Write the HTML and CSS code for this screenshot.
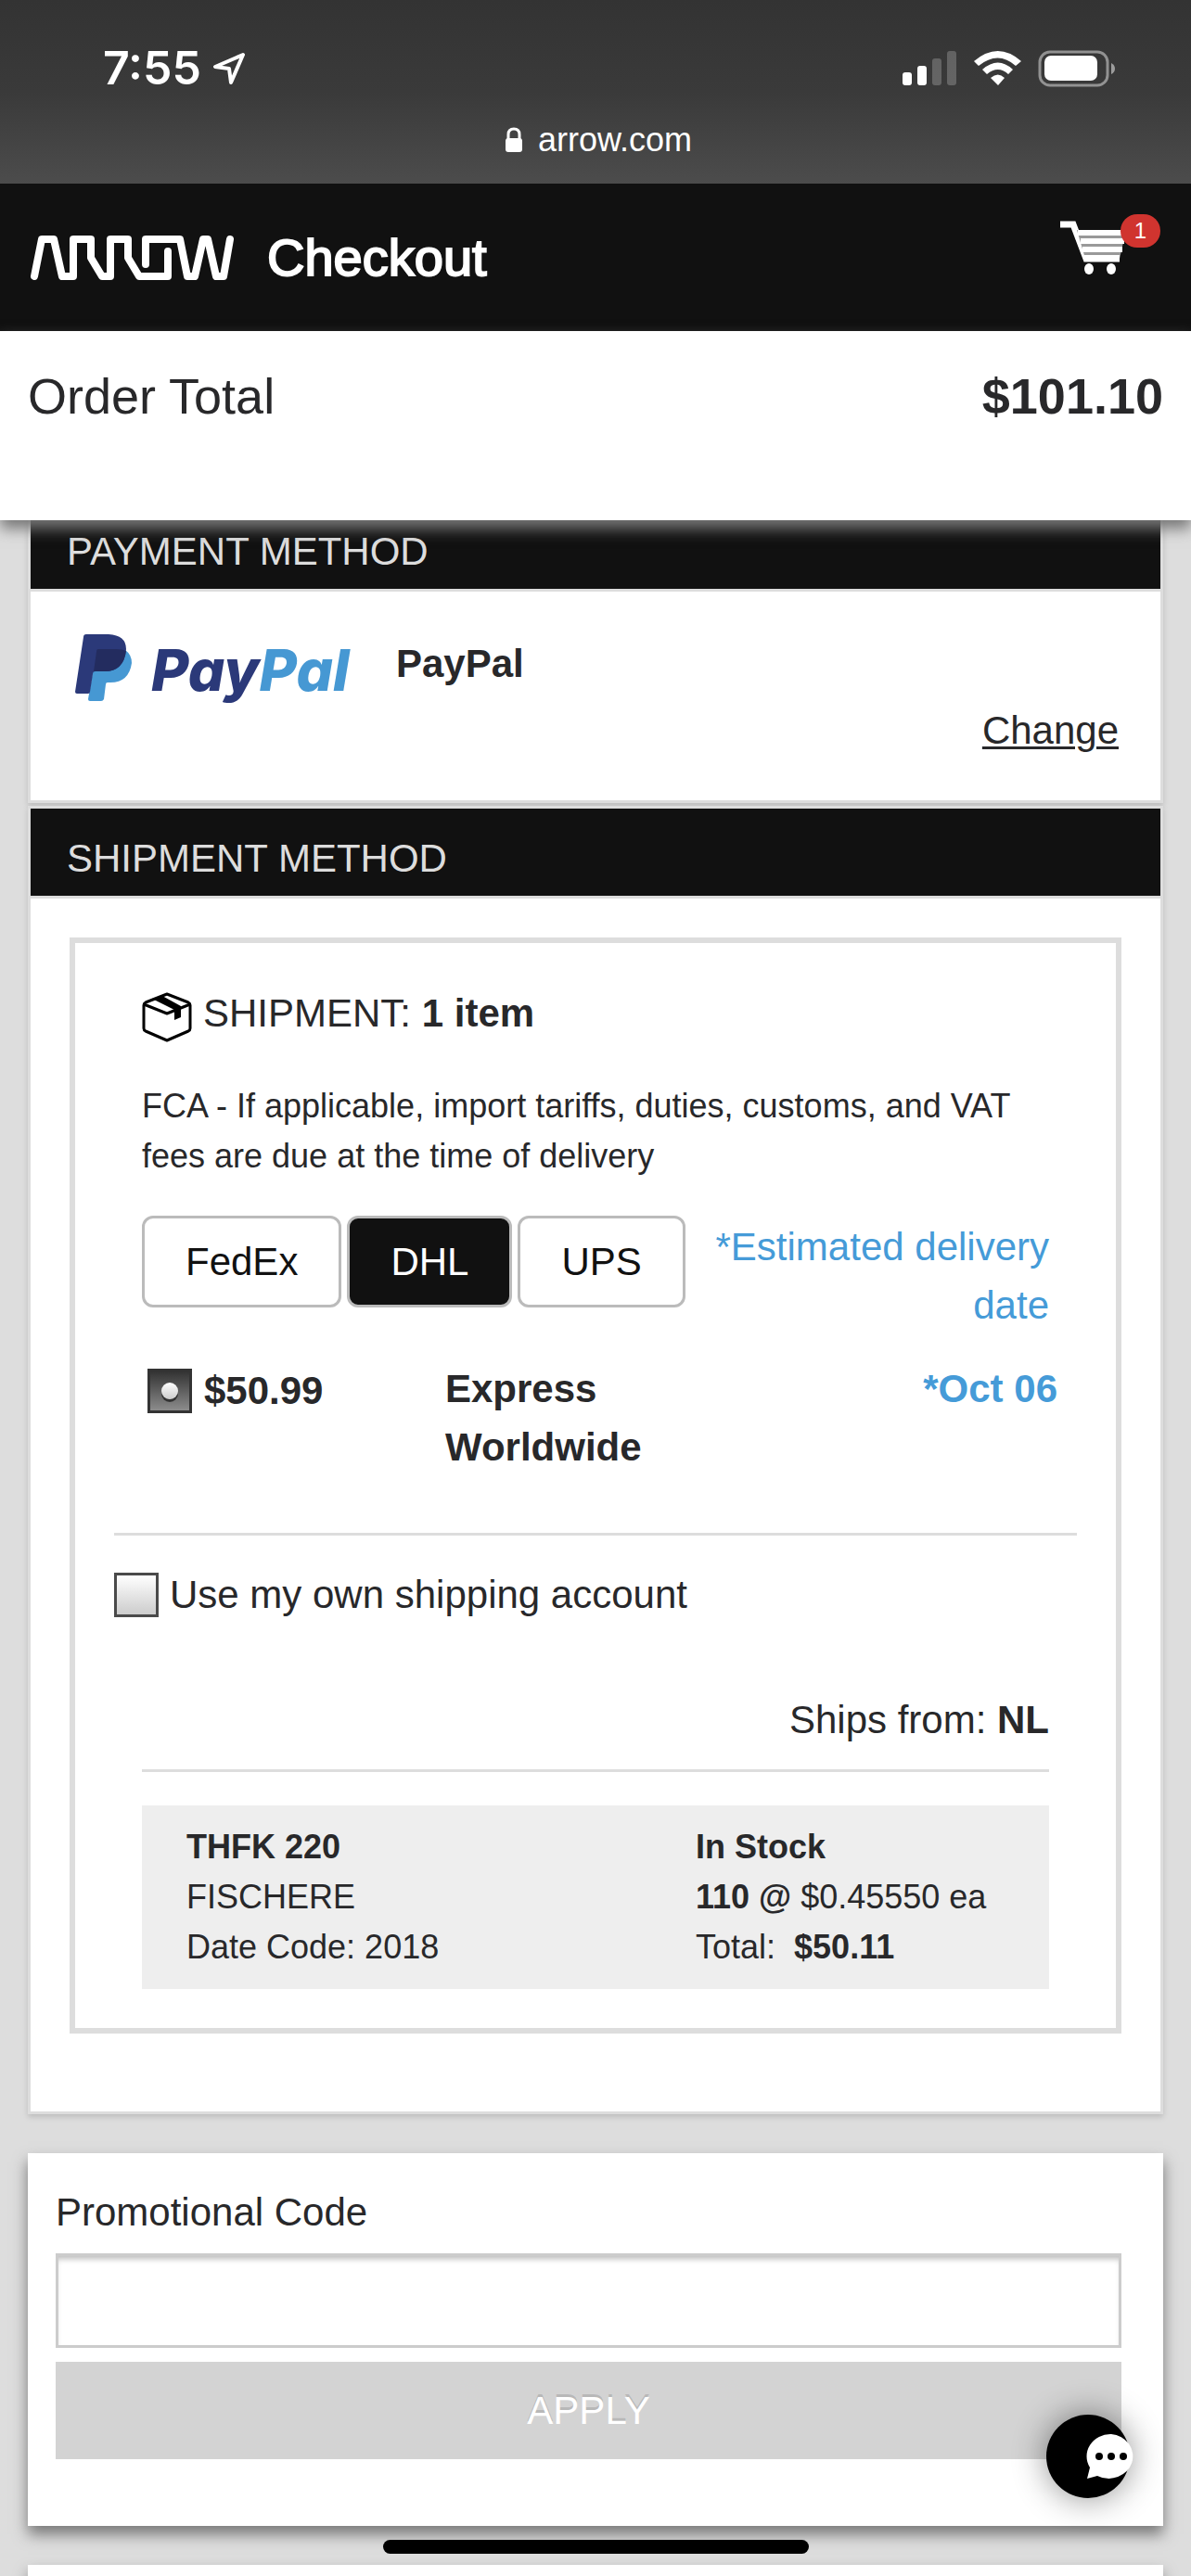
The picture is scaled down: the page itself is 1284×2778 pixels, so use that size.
FILE: index.html
```html
<!DOCTYPE html>
<html lang="en">
<head>
    <meta charset="UTF-8">
    <meta name="viewport" content="width=device-width, initial-scale=1.0">
    <title>Checkout</title>
    <link rel="stylesheet" href="styles.css">
</head>
<body>

<div class="status-bar">
    <div class="status-row">
        <div class="clock">
            <span>7:55</span>
            <svg width="36" height="36" viewBox="0 0 36 36" fill="none" stroke="white" stroke-width="4" stroke-linejoin="round">
                <path d="M33 3 L3 16 L18 18 L20 33 Z"/>
            </svg>
        </div>
        <svg class="status-icons" width="232" height="40" viewBox="0 0 232 40">
            <g fill="white">
                <rect x="0" y="24" width="10" height="14" rx="3"/>
                <rect x="16" y="17" width="10" height="21" rx="3"/>
                <rect x="32" y="9" width="10" height="29" rx="3" opacity=".22"/>
                <rect x="48" y="1" width="10" height="37" rx="3" opacity=".22"/>
                <path d="M77 12 Q103 -10 128 12 L122 17 Q103 0 82 17 Z"/>
                <path d="M86 21 Q103 6 119 21 L114 26 Q103 16 91 26 Z"/>
                <path d="M95 30 Q103 23 110 30 L103 38 Z"/>
                <rect x="153" y="6" width="57" height="27" rx="7"/>
                <path d="M225 14 Q229 16 229 20 Q229 24 225 26 Z" opacity=".5"/>
            </g>
            <rect x="148" y="2" width="73" height="36" rx="11" fill="none" stroke="white" stroke-width="3" opacity=".45"/>
        </svg>
    </div>
    <div class="address">
        <svg width="20" height="28" viewBox="0 0 20 28">
            <rect x="1" y="12" width="18" height="15" rx="3" fill="white"/>
            <path d="M4 13 V8 Q4 2 10 2 Q16 2 16 8 V13" fill="none" stroke="white" stroke-width="3"/>
        </svg>
        <span>arrow.com</span>
    </div>
</div>

<header class="navbar">
    <a class="logo" href="#" aria-label="Arrow">
        <svg width="219" height="48" viewBox="0 0 219 48" fill="none" stroke="white" stroke-width="8" stroke-linejoin="round" stroke-linecap="round">
            <path d="M4 44 L12 4 H25 L34 44 H46 V4 H65 V24 L77 44 H86 V4 H105 V24 L117 44 H148 V17"/>
            <path d="M124 31 V4 H161 L169 44 H177 L186 4 H191 L200 44 H208 L215 4"/>
        </svg>
    </a>
    <h1>Checkout</h1>
    <a class="cart" href="#" aria-label="Cart">
        <svg width="72" height="60" viewBox="0 0 72 60">
            <path d="M0 5 H14 L28 42 H64" fill="none" stroke="white" stroke-width="7"/>
            <path d="M18 11 H71 L64 42 H27 Z" fill="#999"/>
            <path d="M19 14 H70 M22 23 H69 M24 32 H67 M26 41 H64" stroke="white" stroke-width="6"/>
            <ellipse cx="31" cy="53" rx="5" ry="6" fill="white"/>
            <ellipse cx="55" cy="53" rx="5" ry="6" fill="white"/>
        </svg>
        <span class="badge">1</span>
    </a>
</header>

<section class="order-total">
    <span>Order Total</span>
    <strong>$101.10</strong>
</section>

<main>
    <section class="card">
        <h2>PAYMENT METHOD</h2>
        <div class="payment">
            <div class="payment-row">
                <div class="paypal">
                    <svg width="61" height="72" viewBox="0 0 61 72">
                        <path d="M23 17 H54 Q61 22 61 31 Q58 52 38 52 H35 Q33 52 33 54 L31 70 Q30 72 28 72 H16 Q14 72 14 70 Z" fill="#4698d3"/>
                        <path d="M12 0 H36 Q55 1 55 16 Q53 40 32 40 H22 Q19 40 19 43 L16 62 Q16 64 14 64 H2 Q0 64 0 62 L9 3 Q9 0 12 0 Z" fill="#2b3979"/>
                        <path d="M25 16 H44 Q51 16 55 18 Q52 40 32 40 H20 L23 19 Q23 16 25 16 Z" fill="#232c5f"/>
                    </svg>
                    <span class="wordmark">Pay<span>Pal</span></span>
                </div>
                <strong>PayPal</strong>
            </div>
            <a class="change" href="#">Change</a>
        </div>
    </section>

    <section class="card">
        <h2>SHIPMENT METHOD</h2>
        <div class="shipment">
            <div class="frame">
                <div class="shipment-title">
                    <svg width="54" height="54" viewBox="0 0 54 54" fill="none" stroke="black" stroke-width="3" stroke-linejoin="round">
                        <path d="M27 2 L50 11 Q52 12 52 14 V39 Q52 41 50 42 L27 52 L4 42 Q2 41 2 39 V14 Q2 12 4 11 Z"/>
                        <path d="M2 13 L27 23 L52 13"/>
                        <path d="M11 7 L22 4 L42 15 V27 L35 30 V19 Z" fill="black" stroke="none"/>
                    </svg>
                    <span>SHIPMENT: <strong>1 item</strong></span>
                </div>
                <p class="note">FCA - If applicable, import tariffs, duties, customs, and VAT fees are due at the time of delivery</p>

                <div class="carriers">
                    <button type="button">FedEx</button>
                    <button type="button" class="active">DHL</button>
                    <button type="button">UPS</button>
                    <span class="estimate">*Estimated delivery date</span>
                </div>

                <div class="rate">
                    <label><input type="radio" name="rate" checked>$50.99</label>
                    <span>Express Worldwide</span>
                    <span class="date">*Oct 06</span>
                </div>

                <div class="own-account">
                    <label><input type="checkbox">Use my own shipping account</label>
                </div>

                <div class="ships-from">Ships from: <strong>NL</strong></div>

                <div class="item">
                    <div>
                        <strong>THFK 220</strong><br>
                        FISCHERE<br>
                        Date Code: 2018
                    </div>
                    <div>
                        <strong>In Stock</strong><br>
                        <strong>110 @</strong> $0.45550 ea<br>
                        Total: &nbsp;<strong>$50.11</strong>
                    </div>
                </div>
            </div>
        </div>
    </section>

    <form class="panel promo">
        <label for="promo">Promotional Code</label>
        <input type="text" id="promo">
        <button type="button">APPLY</button>
    </form>

    <div class="panel next"></div>
</main>

<button type="button" class="chat" aria-label="Chat">
    <svg width="54" height="48" viewBox="0 0 54 48">
        <path d="M27 0 A26 24 0 1 1 12 45 L1 48 L4 36 A26 24 0 0 1 27 0 Z" fill="white"/>
        <circle cx="14" cy="24" r="4"/>
        <circle cx="27" cy="24" r="4"/>
        <circle cx="40" cy="24" r="4"/>
    </svg>
</button>
<div class="home-indicator"></div>

</body>
</html>
```
FILE: styles.css
```css
* {
    box-sizing: border-box;
}

body {
    margin: 0;
    min-height: 100vh;
    display: flex;
    flex-direction: column;
    background: #ddd;
    color: #28282a;
    font-family: "Liberation Sans", Arial, sans-serif;
    font-size: 42px;
    line-height: 63px;
    overflow-x: hidden;
}

svg {
    display: block;
    flex: none;
}

button, input {
    margin: 0;
    font: inherit;
}

/* Phone status bar */
.status-bar {
    height: 198px;
    padding-top: 42px;
    background: linear-gradient(#333, #3a3a3a 50%, #4c4c4c);
    color: white;
}

.status-row {
    display: flex;
    justify-content: space-between;
    align-items: center;
    height: 63px;
    padding: 0 79px 0 111px;
}

.clock {
    display: flex;
    align-items: center;
    gap: 12px;
    font-family: Inter, sans-serif;
    font-size: 50px;
    font-weight: 600;
}

.address {
    display: flex;
    justify-content: center;
    align-items: center;
    gap: 16px;
    height: 63px;
    margin-top: 14px;
    padding-left: 6px;
    font-size: 36px;
}

/* Header */
.navbar {
    display: flex;
    align-items: center;
    height: 159px;
    padding: 0 33px;
    background: #111;
    color: white;
}

.navbar h1 {
    margin: 0 auto 0 36px;
    font-size: 56px;
    font-weight: normal;
    -webkit-text-stroke: 2px white;
}

.cart {
    display: flex;
    align-items: flex-start;
    position: relative;
    padding-right: 36px;
    padding-bottom: 22px;
}

.badge {
    position: absolute;
    top: -6px;
    right: 0;
    width: 43px;
    border-radius: 18px;
    background: #d0342f;
    color: white;
    font-size: 24px;
    line-height: 36px;
    text-align: center;
}

.cart, .logo {
    text-decoration: none;
}

.order-total {
    display: flex;
    justify-content: space-between;
    position: relative;
    z-index: 1;
    padding: 28px 30px 92px;
    background: white;
    box-shadow: 0 9px 15px #777;
    font-size: 54px;
    line-height: 84px;
}

main {
    flex: 1;
    display: flex;
    flex-direction: column;
    margin-top: -23px; /* first card slides under the order total */
    padding: 0 30px;
}

/* Cards */
.card {
    margin-bottom: 3px;
    border: 3px solid #ddd;
    background: white;
    box-shadow: 0 3px 6px rgba(0, 0, 0, 0.15);
}

.card h2 {
    margin: 0;
    padding: 22px 39px 9px;
    background: #111;
    color: #ddd;
    font-size: 42px;
    font-weight: normal;
}

.payment, .shipment {
    border-top: 3px solid #ddd;
}

.payment {
    padding: 46px 45px 44px 48px;
}

.payment-row {
    display: flex;
    height: 72px;
}

.paypal {
    display: flex;
    gap: 21px;
    width: 346px;
}

.wordmark {
    color: #2b3979;
    font-family: Inter, sans-serif;
    font-size: 62px;
    font-weight: 800;
    font-style: italic;
    line-height: 78px;
}

.wordmark span {
    color: #4698d3;
}

.change {
    display: block;
    color: inherit;
    text-align: right;
    text-decoration-thickness: 3px;
    text-underline-offset: 3px;
}

.shipment {
    padding: 42px 42px 84px;
}

.frame {
    padding: 44px 72px 42px;
    border: 6px solid #ddd;
}

.shipment-title {
    display: flex;
    align-items: flex-end;
    gap: 12px;
}

.note {
    margin: 42px 0 37px;
    font-size: 36px;
    line-height: 54px;
}

.carriers {
    display: flex;
    align-items: flex-start;
    gap: 6px;
}

.carriers button {
    height: 99px;
    padding: 0 44px;
    border: 3px solid #bbb;
    border-radius: 12px;
    background: white;
    color: #111;
}

.carriers button.active {
    background: #111;
    color: white;
}

.estimate {
    flex: 1;
    padding-top: 2px;
    text-align: right;
}

.estimate, .rate .date {
    color: #459bd8;
}

.rate {
    display: grid;
    grid-template-columns: 321fr 366fr 294fr;
    margin: 27px -9px 61px 6px;
    font-weight: bold;
}

.rate label {
    display: flex;
    align-items: center;
    align-self: start;
    gap: 13px;
    padding-top: 2px;
}

.rate .date {
    text-align: right;
}

input[type="radio"], input[type="checkbox"] {
    appearance: none;
    flex: none;
    width: 48px;
    height: 48px;
    border: 3px solid #4a4a4a;
    background: linear-gradient(white, #ccc);
}

input[type="radio"] {
    display: grid;
    place-items: center;
    border-color: #333;
    background: linear-gradient(#333, #8c8c8c);
}

input[type="radio"]:checked::before {
    content: "";
    width: 18px;
    height: 18px;
    border-radius: 50%;
    background: linear-gradient(white, #ccc);
    box-shadow: 0 3px 0 #333;
}

.own-account {
    margin: 0 -30px 72px;
    padding-top: 32px;
    border-top: 3px solid #ddd;
}

.own-account label {
    display: flex;
    align-items: center;
    gap: 12px;
}

.ships-from {
    padding-bottom: 22px;
    border-bottom: 3px solid #ddd;
    text-align: right;
}

.item {
    display: grid;
    grid-template-columns: 549fr 381fr;
    margin-top: 36px;
    padding: 18px 0 18px 48px;
    background: #eee;
    font-size: 36px;
    line-height: 54px;
}

/* Promo code */
.panel {
    background: white;
    box-shadow: 0 9px 15px #777;
}

.promo {
    display: flex;
    flex-direction: column;
    margin: 39px 0 42px;
    padding: 32px 45px 72px 30px;
}

.promo input {
    height: 102px;
    margin: 13px 0 15px;
    padding: 0 18px;
    border: 3px solid #ccc;
    border-radius: 0;
    background: white;
    box-shadow: inset 0 6px 6px -3px #bbb;
}

.promo button {
    height: 105px;
    border: none;
    background: #d3d3d3;
    color: white;
    text-shadow: 0 -3px 0 rgba(0, 0, 0, 0.12);
}

.next {
    flex: 1;
    min-height: 12px;
}

.chat {
    position: fixed;
    right: 66px;
    bottom: 84px;
    width: 90px;
    height: 90px;
    padding: 0 0 0 43px;
    border: none;
    border-radius: 50%;
    background: black;
    box-shadow: 0 0 36px rgba(0, 0, 0, 0.45);
}

.home-indicator {
    position: fixed;
    left: 50%;
    bottom: 24px;
    width: 459px;
    height: 15px;
    margin-left: -229px;
    border-radius: 8px;
    background: black;
}
```
